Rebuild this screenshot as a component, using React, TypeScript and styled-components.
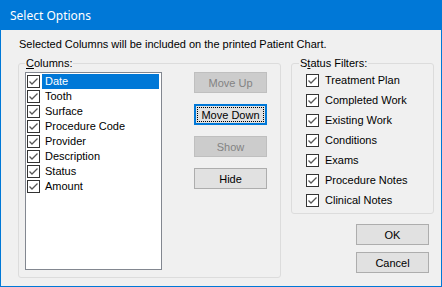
import React from 'react'
import {createGlobalStyle, styled} from 'styled-components'

const columns = ['Date', 'Tooth', 'Surface', 'Procedure Code', 'Provider', 'Description', 'Status', 'Amount']
const filters = ['Treatment Plan', 'Completed Work', 'Existing Work', 'Conditions', 'Exams', 'Procedure Notes', 'Clinical Notes']

const CheckMark: React.FC = () => (
    <CheckBox viewBox="0 0 13 13">
        <rect x="0.5" y="0.5" width="12" height="12" fill="#fff" stroke="#333" />
        <polyline points="2.5,6.5 5,9 10.5,3.5" fill="none" stroke="#555" strokeWidth="1.3" />
    </CheckBox>
)

const App: React.FC = () => {
    return (
        <>
            <GlobalStyle />
            <Window>
                <TitleBar>Select Options</TitleBar>
                <Body>
                    <Intro>Selected Columns will be included on the printed Patient Chart.</Intro>
                    <Content>
                        <ColumnsGroup>
                            <Legend><u>C</u>olumns:</Legend>
                            <ColumnsInner>
                                <ListBox>
                                    {columns.map((c, i) => (
                                        <ListItem key={c}>
                                            <CheckMark />
                                            <ItemText $selected={i === 0}>{c}</ItemText>
                                        </ListItem>
                                    ))}
                                </ListBox>
                                <ButtonColumn>
                                    <Button disabled>Move Up</Button>
                                    <Button $focused>Move Down</Button>
                                    <Button disabled>Show</Button>
                                    <Button>Hide</Button>
                                </ButtonColumn>
                            </ColumnsInner>
                        </ColumnsGroup>
                        <RightColumn>
                            <StatusGroup>
                                <Legend>S<u>t</u>atus Filters:</Legend>
                                <FilterList>
                                    {filters.map(f => (
                                        <FilterRow key={f}>
                                            <CheckMark />
                                            <span>{f}</span>
                                        </FilterRow>
                                    ))}
                                </FilterList>
                            </StatusGroup>
                            <DialogButtons>
                                <Button>OK</Button>
                                <Button>Cancel</Button>
                            </DialogButtons>
                        </RightColumn>
                    </Content>
                </Body>
            </Window>
        </>
    )
}

export default App

const GlobalStyle = createGlobalStyle`
    body {
        margin: 0;
        background: #f0f0f0;
    }
`

const Window = styled.div`
    width: 442px;
    height: 287px;
    box-sizing: border-box;
    border: 1px solid #0078d7;
    border-top: 0;
    background: #f0f0f0;
    display: flex;
    flex-direction: column;
    font-family: "Liberation Sans", Arial, sans-serif;
    font-size: 11px;
    color: #000;
`

const TitleBar = styled.div`
    height: 30px;
    margin: 0 -1px;
    padding-left: 10px;
    background: #0078d7;
    color: #fff;
    font-family: "Segoe UI", "Noto Sans", sans-serif;
    font-size: 12px;
    display: flex;
    align-items: center;
`

const Body = styled.div`
    padding: 8px 0 0 17px;
`

const Intro = styled.div`
    line-height: 13px;
    margin-left: 1px;
`

const Content = styled.div`
    display: flex;
    gap: 10px;
    margin-top: 6px;
    align-items: flex-start;
`

const Legend = styled.legend`
    padding: 0 1px;
    line-height: 13px;
`

const ColumnsGroup = styled.fieldset`
    width: 263px;
    box-sizing: border-box;
    margin: 0;
    border: 1px solid #dcdcdc;
    border-radius: 3px;
    padding: 0 7px 7px 6px;
`

const ColumnsInner = styled.div`
    display: flex;
    gap: 32px;
    align-items: flex-start;
    padding-top: 2px;
`

const ListBox = styled.div`
    width: 137px;
    height: 198px;
    box-sizing: border-box;
    border: 1px solid #828790;
    background: #fff;
    padding: 1px 0 0 1px;
`

const ListItem = styled.div`
    height: 15px;
    display: flex;
    align-items: center;
`

const CheckBox = styled.svg`
    width: 13px;
    height: 13px;
    flex: none;
`

const ItemText = styled.span<{$selected?: boolean}>`
    flex: 1;
    height: 15px;
    line-height: 15px;
    margin: 0 2px 0 2px;
    padding-left: 3px;
    background: ${p => (p.$selected ? '#0078d7' : 'transparent')};
    color: ${p => (p.$selected ? '#fff' : '#000')};
`

const ButtonColumn = styled.div`
    display: flex;
    flex-direction: column;
    gap: 11px;
`

const Button = styled.button<{$focused?: boolean}>`
    position: relative;
    width: 73px;
    height: 21px;
    padding: 0;
    box-sizing: border-box;
    font-family: "Liberation Sans", Arial, sans-serif;
    font-size: 11px;
    font-weight: normal;
    color: #000;
    background: #e1e1e1;
    border: ${p => (p.$focused ? '2px solid #0078d7' : '1px solid #adadad')};
    border-radius: 0;

    &:disabled {
        background: #cccccc;
        border-color: #bfbfbf;
        color: #838383;
    }

    ${p =>
        p.$focused &&
        `
        &::after {
            content: '';
            position: absolute;
            inset: 1px;
            border: 1px dotted #000;
        }
    `}
`

const RightColumn = styled.div`
    width: 143px;
    display: flex;
    flex-direction: column;
`

const StatusGroup = styled.fieldset`
    margin: 0;
    border: 1px solid #dcdcdc;
    border-radius: 3px;
    padding: 0 7px 3px 7px;
`

const FilterList = styled.div`
    margin-left: 7px;
    display: flex;
    flex-direction: column;
`

const FilterRow = styled.div`
    height: 20px;
    display: flex;
    align-items: center;
    gap: 6px;
`

const DialogButtons = styled.div`
    align-self: flex-end;
    margin: 10px 5px 0 0;
    display: flex;
    flex-direction: column;
    gap: 7px;
`
